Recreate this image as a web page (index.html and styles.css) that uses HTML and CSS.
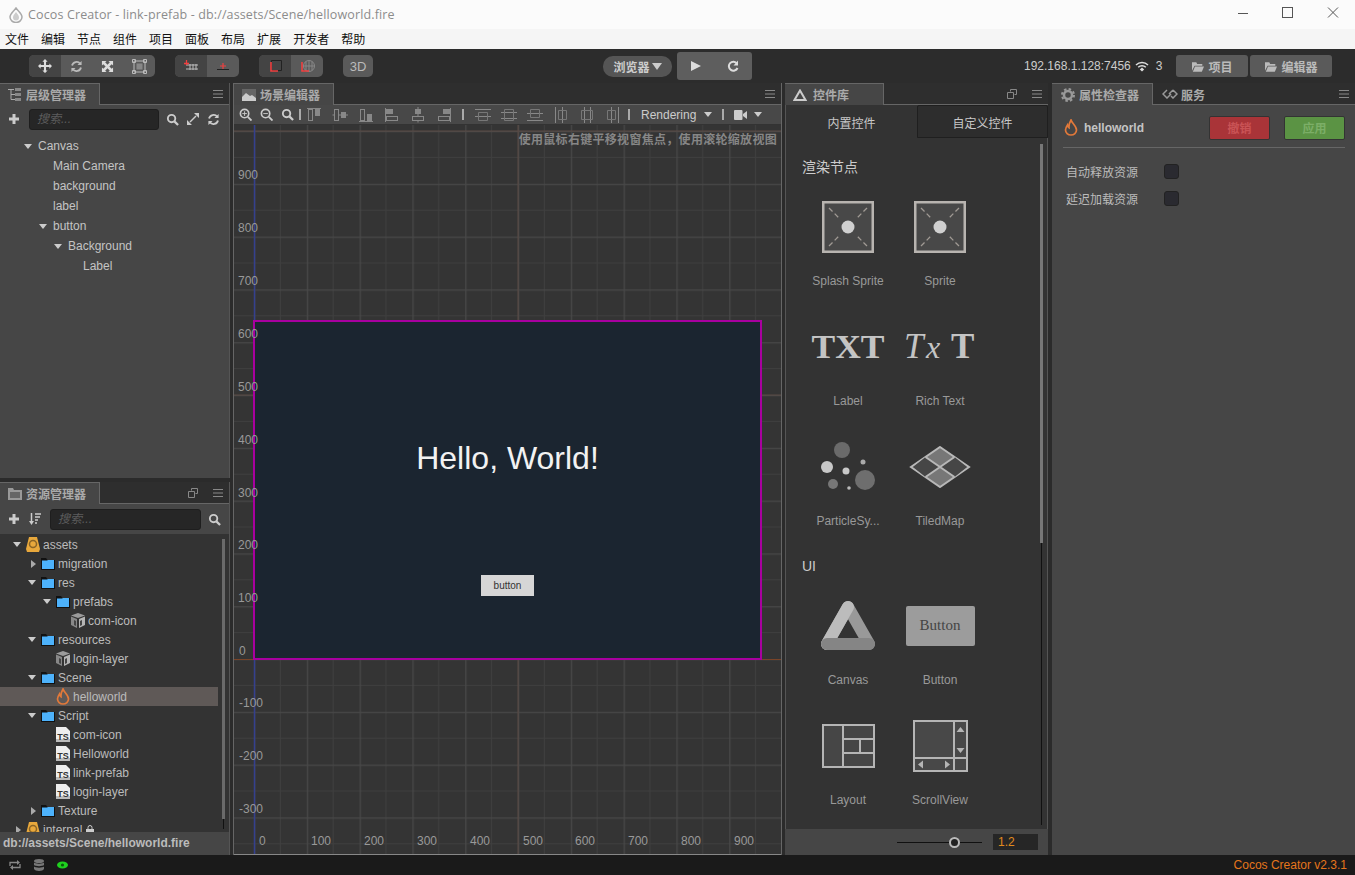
FILE: index.html
```html
<!DOCTYPE html>
<html lang="en">
<head>
    <meta charset="UTF-8">
    <title>Cocos Creator - link-prefab</title>
    <link rel="stylesheet" href="styles.css">
</head>
<body>
<svg class="sprite" width="0" height="0">
    <symbol id="i-search" viewBox="0 0 14 14"><circle cx="6" cy="6" r="4" fill="none" stroke="currentColor" stroke-width="2"/><path d="M9 9l4 4" stroke="currentColor" stroke-width="2.4"/></symbol>
    <symbol id="i-plus" viewBox="0 0 12 12"><path d="M6 1v10M1 6h10" stroke="currentColor" stroke-width="3"/></symbol>
    <symbol id="i-sync" viewBox="0 0 14 14"><path d="M2.2 6A5 5 0 0 1 11 4M11.8 8A5 5 0 0 1 3 10" fill="none" stroke="currentColor" stroke-width="2"/><path d="M12.5 1v4.5H8zM1.5 13V8.500H6z" fill="currentColor"/></symbol>
    <symbol id="i-menu" viewBox="0 0 10 8"><path d="M0 .5h10M0 4h10M0 7.500h10" stroke="currentColor"/></symbol>
    <symbol id="i-popout" viewBox="0 0 10 10"><path d="M3.500 2.500V.5h6v5h-2M.5 3.500h6v6h-6z" fill="none" stroke="currentColor"/></symbol>
    <symbol id="i-folder" viewBox="0 0 14 13"><path d="M0 1h5l1.500 2H14v10H0z" fill="#111"/><path d="M1 3.500h5l1-.5h6v9H1z" fill="#4db2fb"/></symbol>
    <symbol id="i-db" viewBox="0 0 14 15"><path d="M3 0h8l3 12-1 3H1l-1-3z" fill="#e8a83c"/><circle cx="7" cy="7" r="3.500" fill="none" stroke="#8a6426" stroke-width="1.500"/></symbol>
    <symbol id="i-cube" viewBox="0 0 14 15"><path d="M7 0l7 2.500-7 2.500-7-2.500z" fill="#9b9b9b"/><path d="M0 3.500l6 2.500v9l-6-3z" fill="#888"/><path d="M14 3.500L8 6v9l6-3z" fill="#b5b5b5"/><path d="M3 7v5l2 1V8zM11 7v5l-2 1V8z" fill="#444"/></symbol>
    <symbol id="i-fire" viewBox="0 0 14 17"><path d="M7 1c.5 3 5.500 5.500 5.500 10a5.500 5 0 0 1-11 0c0-2 1-3.500 2-5 .3 1.500.8 2.300 1.500 2.700C4.800 6 5.500 3.500 7 1z" fill="none" stroke="#e2793a" stroke-width="1.700"/></symbol>
    <symbol id="i-sprite" viewBox="0 0 52 52"><rect x="1.250" y="1.250" width="49.500" height="49.500" fill="#484848" stroke="#b8b4b0" stroke-width="2.500"/><path d="M7 7l10 10M45 7L35 17M7 45l10-10M45 45L35 35" stroke="#a09a94" stroke-width="1.300" stroke-dasharray="5 3"/><circle cx="26" cy="26" r="6.500" fill="#d0d0d0"/></symbol>
    <symbol id="i-align-top" viewBox="0 0 16 16"><path d="M1 1.500h14" stroke="#888"/><rect x="2.500" y="2.500" width="4" height="11" fill="none" stroke="#888"/><rect x="9" y="2" width="5" height="7" fill="#888"/></symbol>
    <symbol id="i-align-mid" viewBox="0 0 16 16"><path d="M.5 8H2M7 8h2M14 8h2" stroke="#888"/><rect x="2.500" y="2.500" width="4" height="11" fill="none" stroke="#888"/><rect x="9" y="5" width="5" height="6" fill="#888"/></symbol>
    <symbol id="i-align-bot" viewBox="0 0 16 16"><path d="M1 14.500h14" stroke="#888"/><rect x="2.500" y="2.500" width="4" height="11" fill="none" stroke="#888"/><rect x="9" y="7" width="5" height="7" fill="#888"/></symbol>
    <symbol id="i-dist-top" viewBox="0 0 16 16"><path d="M0 2.500h16M0 9.500h16" stroke="#888"/><path d="M3.500 5.500h9v8h-9z" fill="none" stroke="#777"/></symbol>
    <symbol id="i-dist-mid" viewBox="0 0 16 16"><path d="M0 5.500h16M0 11.500h16" stroke="#888"/><path d="M3.500 2.500h9v11h-9z" fill="none" stroke="#777"/></symbol>
    <symbol id="i-dist-bot" viewBox="0 0 16 16"><path d="M0 6.500h16M0 13.500h16" stroke="#888"/><path d="M3.500 2.500h9v8h-9z" fill="none" stroke="#777"/></symbol>
    <symbol id="i-open" viewBox="0 0 14 12"><path d="M0 1h5l1 2h6v2H3L0 11z" fill="currentColor"/><path d="M3.500 6H14l-2.500 6H1z" fill="currentColor"/></symbol>
</svg>

<div class="app">
    <div class="titlebar">
        <svg class="app-logo" viewBox="0 0 14 16" width="14" height="16"><path d="M7 1c3 4 6 6 6 9a6 5.500 0 0 1-12 0c0-3 3-5 6-9z" fill="none" stroke="#aaa" stroke-width="1.500"/><path d="M7 5c1.500 2 3 3.500 3 5.500a3 3 0 0 1-6 0C4 8.500 5.500 7 7 5z" fill="#ccc"/></svg>
        <span class="title-text">Cocos Creator - link-prefab - db://assets/Scene/helloworld.fire</span>
        <div class="win-buttons">
            <span class="win-btn"><svg width="12" height="12" viewBox="0 0 12 12"><path d="M1 6.500h10" stroke="#555"/></svg></span>
            <span class="win-btn"><svg width="12" height="12" viewBox="0 0 12 12"><rect x=".5" y=".5" width="10" height="10" fill="none" stroke="#555"/></svg></span>
            <span class="win-btn"><svg width="12" height="12" viewBox="0 0 12 12"><path d="M1 .5l10 10M11 .5l-10 10" stroke="#555"/></svg></span>
        </div>
    </div>
    <div class="menubar">
        <span>文件</span><span>编辑</span><span>节点</span><span>组件</span><span>项目</span><span>面板</span><span>布局</span><span>扩展</span><span>开发者</span><span>帮助</span>
    </div>

    <div class="toolbar">
        <div class="tool-group">
            <span class="tool active"><svg width="14" height="14" viewBox="0 0 16 16"><path d="M8 0l3 3H9.200v3.800H13V5l3 3-3 3V9.200H9.200V13H11l-3 3-3-3h1.800V9.200H3V11L0 8l3-3v1.800h3.800V3H5z" fill="#ddd"/></svg></span>
            <span class="tool"><svg width="13" height="13"><use href="#i-sync"/></svg></span>
            <span class="tool"><svg width="13" height="13" viewBox="0 0 14 14"><path d="M1 1h5L4.500 2.500l2.500 2.500 2.500-2.500L8 1h5v5l-1.500-1.500L9 7l2.500 2.500L13 8v5H8l1.500-1.500L7 9l-2.500 2.500L6 13H1V8l1.500 1.500L5 7 2.500 4.500 1 6z" fill="#ddd"/></svg></span>
            <span class="tool"><svg width="15" height="15" viewBox="0 0 15 15"><path d="M.5.5h3v3h-3zM11.500.5h3v3h-3zM.5 11.500h3v3h-3zM11.500 11.500h3v3h-3zM2 2h11v11H2z" fill="none" stroke="#bbb"/><rect x="4.500" y="4.500" width="6" height="6" fill="#888"/></svg></span>
        </div>
        <div class="tool-group">
            <span class="tool active"><svg width="14" height="12" viewBox="0 0 14 12"><path d="M2 5h12M2 9h12M6 4v6M9 4v6M12 4v6" stroke="#bbb"/><path d="M0 3.500h5M2.500 0v5" stroke="#f04040" stroke-width="1.300" fill="none"/></svg></span>
            <span class="tool"><svg width="14" height="12" viewBox="0 0 14 12"><path d="M1 9.500h12" stroke="#222"/><path d="M7 3v6M4 6h6" stroke="#f04040" stroke-width="1.200"/></svg></span>
        </div>
        <div class="tool-group">
            <span class="tool active"><svg width="13" height="13" viewBox="0 0 13 13"><path d="M2.500.5h10v10h-10z" fill="none" stroke="#222"/><path d="M2 2v9h7" fill="none" stroke="#f04040" stroke-width="1.600"/></svg></span>
            <span class="tool"><svg width="15" height="13" viewBox="0 0 15 13"><circle cx="9" cy="6" r="5.500" fill="none" stroke="#888"/><path d="M9 .5v11M3.500 6h11M6 1.500v9M12 1.500v9" stroke="#888"/><path d="M2 2v9h7" fill="none" stroke="#f04040" stroke-width="1.600"/></svg></span>
        </div>
        <div class="tool-group"><span class="tool label-3d">3D</span></div>
        <div class="browser-pill">浏览器<span class="caret-down"></span></div>
        <div class="play-group">
            <svg width="12" height="12" viewBox="0 0 12 12"><path d="M1 1l10 5-10 5z" fill="#ddd"/></svg>
            <svg width="12" height="12" viewBox="0 0 12 12"><path d="M10 3.500A4.500 4.500 0 1 0 10.500 8" fill="none" stroke="#ddd" stroke-width="2"/><path d="M11 .5v5H6.500z" fill="#ddd"/></svg>
        </div>
        <div class="preview-info">
            <span>192.168.1.128:7456</span>
            <svg width="14" height="11" viewBox="0 0 14 11"><path d="M1 4a8.500 8.500 0 0 1 12 0M3.200 6.200a5.500 5.500 0 0 1 7.600 0" fill="none" stroke="#ddd" stroke-width="1.500"/><path d="M7 6.500l2.200 2L7 10.500l-2.200-2z" fill="#ddd"/></svg>
            <span>3</span>
        </div>
        <div class="open-btn open-project"><svg width="12" height="11"><use href="#i-open"/></svg>项目</div>
        <div class="open-btn open-editor"><svg width="12" height="11"><use href="#i-open"/></svg>编辑器</div>
    </div>

    <div class="main">
        <div class="col-left">
            <section class="panel hierarchy">
                <div class="tabbar">
                    <div class="tab tab-hierarchy">
                        <svg width="14" height="14" viewBox="0 0 14 14"><path d="M0 1.500h6M3 1.500v10h4M3 6.500h4" fill="none" stroke="#aaa"/><path d="M7 0h6v3H7zM7 5h6v3H7zM7 10h6v3H7z" fill="#888"/></svg>
                        层级管理器
                    </div>
                    <div class="tab-tools"><svg width="10" height="8"><use href="#i-menu"/></svg></div>
                </div>
                <div class="search-row">
                    <svg class="tool-plus" width="12" height="12"><use href="#i-plus"/></svg>
                    <div class="search-box box-hierarchy">搜索...</div>
                    <div class="search-tools">
                        <svg width="13" height="13"><use href="#i-search"/></svg>
                        <svg width="12" height="12" viewBox="0 0 12 12"><path d="M3 9l6-6" stroke="currentColor" stroke-width="1.500"/><path d="M7 0h5v5zM5 12H0V7z" fill="currentColor"/></svg>
                        <svg width="13" height="13"><use href="#i-sync"/></svg>
                    </div>
                </div>
                <div class="node-tree">
                    <div class="row d0"><span class="arrow"></span>Canvas</div>
                    <div class="row d1"><span class="arrow none"></span>Main Camera</div>
                    <div class="row d1"><span class="arrow none"></span>background</div>
                    <div class="row d1"><span class="arrow none"></span>label</div>
                    <div class="row d1"><span class="arrow"></span>button</div>
                    <div class="row d2"><span class="arrow"></span>Background</div>
                    <div class="row d3"><span class="arrow none"></span>Label</div>
                </div>
            </section>

            <section class="panel assets">
                <div class="tabbar">
                    <div class="tab tab-assets">
                        <svg width="14" height="12" viewBox="0 0 14 12"><path d="M0 0h5l1 2h8v10H0z" fill="#999"/><path d="M2 4h10v6H2z" fill="#666"/></svg>
                        资源管理器
                    </div>
                    <div class="tab-tools">
                        <svg width="10" height="10"><use href="#i-popout"/></svg>
                        <svg width="10" height="8"><use href="#i-menu"/></svg>
                    </div>
                </div>
                <div class="search-row assets-tools">
                    <svg class="tool-plus" width="12" height="12"><use href="#i-plus"/></svg>
                    <svg class="tool-sort" width="12" height="12" viewBox="0 0 12 12"><path d="M2.500 0v9" stroke="currentColor" stroke-width="1.500"/><path d="M0 8h5l-2.500 4z" fill="currentColor"/><path d="M6 1h6M6 4h5M6 7h3M6 10h2" stroke="currentColor" stroke-width="1.500"/></svg>
                    <div class="search-box box-assets">搜索...</div>
                    <svg class="tool-find" width="13" height="13"><use href="#i-search"/></svg>
                </div>
                <div class="asset-tree">
                    <div class="row a0"><span class="arrow"></span><svg class="ico" width="14" height="15"><use href="#i-db"/></svg>assets</div>
                    <div class="row a1"><span class="arrow closed"></span><svg class="ico" width="14" height="13"><use href="#i-folder"/></svg>migration</div>
                    <div class="row a1"><span class="arrow"></span><svg class="ico" width="14" height="13"><use href="#i-folder"/></svg>res</div>
                    <div class="row a2"><span class="arrow"></span><svg class="ico" width="14" height="13"><use href="#i-folder"/></svg>prefabs</div>
                    <div class="row a3"><span class="arrow none"></span><svg class="ico" width="14" height="15"><use href="#i-cube"/></svg>com-icon</div>
                    <div class="row a1"><span class="arrow"></span><svg class="ico" width="14" height="13"><use href="#i-folder"/></svg>resources</div>
                    <div class="row a2"><span class="arrow none"></span><svg class="ico" width="14" height="15"><use href="#i-cube"/></svg>login-layer</div>
                    <div class="row a1"><span class="arrow"></span><svg class="ico" width="14" height="13"><use href="#i-folder"/></svg>Scene</div>
                    <div class="row a2 selected"><span class="arrow none"></span><svg class="ico" width="14" height="17"><use href="#i-fire"/></svg>helloworld</div>
                    <div class="row a1"><span class="arrow"></span><svg class="ico" width="14" height="13"><use href="#i-folder"/></svg>Script</div>
                    <div class="row a2"><span class="arrow none"></span><span class="ts-icon">TS</span>com-icon</div>
                    <div class="row a2"><span class="arrow none"></span><span class="ts-icon">TS</span>Helloworld</div>
                    <div class="row a2"><span class="arrow none"></span><span class="ts-icon">TS</span>link-prefab</div>
                    <div class="row a2"><span class="arrow none"></span><span class="ts-icon">TS</span>login-layer</div>
                    <div class="row a1"><span class="arrow closed"></span><svg class="ico" width="14" height="13"><use href="#i-folder"/></svg>Texture</div>
                    <div class="row a0"><span class="arrow closed"></span><svg class="ico" width="14" height="15"><use href="#i-db"/></svg>internal<svg class="lock" width="8" height="9" viewBox="0 0 8 9"><path d="M2 4V2.500a2 2 0 0 1 4 0V4" fill="none" stroke="#ccc"/><rect y="4" width="8" height="5" fill="#ccc"/></svg></div>
                    <div class="tree-scrollbar"></div>
                </div>
                <div class="path-bar">db://assets/Scene/helloworld.fire</div>
            </section>
        </div>

        <section class="panel scene">
            <div class="tabbar">
                <div class="tab tab-scene">
                    <svg width="14" height="12" viewBox="0 0 14 12"><path d="M0 0h14v12H0z" fill="#666"/><path d="M0 12V8l4-4 4 3 2-1 4 3v3z" fill="#ccc"/></svg>
                    场景编辑器
                </div>
                <div class="tab-tools"><svg width="10" height="8"><use href="#i-menu"/></svg></div>
            </div>
            <div class="scene-tools">
                <svg class="zoom" width="13" height="13" viewBox="0 0 14 14"><circle cx="6" cy="6" r="4.500" fill="none" stroke="#ccc" stroke-width="1.800"/><path d="M9.500 9.500l4 4" stroke="#ccc" stroke-width="2"/><path d="M3.500 6h5M6 3.500v5" stroke="#ccc"/></svg>
                <svg class="zoom" width="13" height="13" viewBox="0 0 14 14"><circle cx="6" cy="6" r="4.500" fill="none" stroke="#ccc" stroke-width="1.800"/><path d="M9.500 9.500l4 4" stroke="#ccc" stroke-width="2"/><path d="M3.500 6h5" stroke="#ccc"/></svg>
                <svg class="zoom" width="13" height="13"><use href="#i-search"/></svg>
                <span class="sep first"></span>
                <svg class="align" width="16" height="16"><use href="#i-align-top"/></svg>
                <svg class="align" width="16" height="16"><use href="#i-align-mid"/></svg>
                <svg class="align" width="16" height="16"><use href="#i-align-bot"/></svg>
                <svg class="align turn" width="16" height="16"><use href="#i-align-top"/></svg>
                <svg class="align turn" width="16" height="16"><use href="#i-align-mid"/></svg>
                <svg class="align turn" width="16" height="16"><use href="#i-align-bot"/></svg>
                <span class="sep"></span>
                <svg class="align" width="16" height="16"><use href="#i-dist-top"/></svg>
                <svg class="align" width="16" height="16"><use href="#i-dist-mid"/></svg>
                <svg class="align" width="16" height="16"><use href="#i-dist-bot"/></svg>
                <svg class="align turn" width="16" height="16"><use href="#i-dist-top"/></svg>
                <svg class="align turn" width="16" height="16"><use href="#i-dist-mid"/></svg>
                <svg class="align turn" width="16" height="16"><use href="#i-dist-bot"/></svg>
                <span class="sep tight"></span>
                <span class="rendering">Rendering<span class="caret-down"></span></span>
                <span class="sep"></span>
                <svg class="camera" width="13" height="10" viewBox="0 0 13 10"><rect width="8.500" height="10" rx="1" fill="#ccc"/><path d="M9 4l4-3v8L9 6z" fill="#ccc"/></svg>
                <span class="caret-down"></span>
            </div>
            <div class="scene-view">
                <svg class="grid" width="548" height="729">
                    <defs>
                        <pattern id="grid-cell" width="52.8" height="52.8" patternUnits="userSpaceOnUse" patternTransform="translate(20 534)">
                            <path d="M26.400 0V52.800M0 26.400H52.800" stroke="#3f3f3f"/>
                            <path d="M.5 0V52.800M0 .5H52.800" stroke="#484848" stroke-width="1.500"/>
                        </pattern>
                    </defs>
                    <rect width="548" height="729" fill="url(#grid-cell)"/>
                    <path d="M284 0V729M0 6H548M0 270H548" stroke="#5a4b45"/>
                    <path d="M0 534.500H548" stroke="#7a4428"/>
                    <path d="M20.500 0V729" stroke="#34408f" stroke-width="1.500"/>
                </svg>
                <div class="scene-hint">使用鼠标右键平移视窗焦点，使用滚轮缩放视图</div>
                <div class="design-rect">
                    <div class="hello">Hello, World!</div>
                    <div class="game-button">button</div>
                </div>
                <svg class="grid ruler" width="548" height="729">
                    <text x="4" y="54">900</text><text x="4" y="107">800</text><text x="4" y="160">700</text>
                    <text x="4" y="213">600</text><text x="4" y="266">500</text><text x="4" y="319">400</text>
                    <text x="4" y="372">300</text><text x="4" y="424">200</text><text x="4" y="477">100</text>
                    <text x="5" y="530">0</text><text x="5" y="582">-100</text><text x="5" y="635">-200</text><text x="5" y="688">-300</text>
                    <text x="25" y="720">0</text><text x="77" y="720">100</text><text x="130" y="720">200</text>
                    <text x="183" y="720">300</text><text x="236" y="720">400</text><text x="289" y="720">500</text>
                    <text x="341" y="720">600</text><text x="394" y="720">700</text><text x="447" y="720">800</text><text x="500" y="720">900</text>
                </svg>
            </div>
        </section>

        <section class="panel library">
            <div class="tabbar">
                <div class="tab tab-library">
                    <svg width="14" height="12" viewBox="0 0 14 12"><path d="M7 1.500L12.500 11h-11z" fill="none" stroke="#ccc" stroke-width="2"/></svg>
                    控件库
                </div>
                <div class="tab-tools">
                    <svg width="10" height="10"><use href="#i-popout"/></svg>
                    <svg width="10" height="8"><use href="#i-menu"/></svg>
                </div>
            </div>
            <div class="lib-tabs">
                <div class="lib-tab">内置控件</div>
                <div class="lib-tab off">自定义控件</div>
            </div>
            <div class="lib-body">
                <h4 class="lib-title">渲染节点</h4>
                <div class="lib-grid">
                    <div class="lib-item"><div class="lib-icon"><svg width="52" height="52"><use href="#i-sprite"/></svg></div><span>Splash Sprite</span></div>
                    <div class="lib-item"><div class="lib-icon"><svg width="52" height="52"><use href="#i-sprite"/></svg></div><span>Sprite</span></div>
                    <div class="lib-item"><div class="lib-icon"><svg width="80" height="44" viewBox="0 0 80 44"><text x="40" y="33" textLength="73" lengthAdjust="spacingAndGlyphs" class="txt-icon mid">TXT</text></svg></div><span>Label</span></div>
                    <div class="lib-item"><div class="lib-icon"><svg width="80" height="44" viewBox="0 0 80 44"><text x="4" y="33" class="txt-icon rich-t">T</text><text x="26" y="33" class="txt-icon rich-x">x</text><text x="51" y="33" class="txt-icon">T</text></svg></div><span>Rich Text</span></div>
                    <div class="lib-item"><div class="lib-icon"><svg width="56" height="50" viewBox="0 0 56 50"><circle cx="22" cy="8" r="8" fill="#6a6a6a"/><circle cx="7" cy="25" r="6" fill="#c8c8c8"/><circle cx="26" cy="29" r="3.500" fill="#c8c8c8"/><circle cx="43" cy="20" r="2.500" fill="#aaa"/><circle cx="13" cy="42" r="5" fill="#777"/><circle cx="45" cy="38" r="10" fill="#6e6e6e"/><circle cx="29" cy="46" r="1.800" fill="#bbb"/></svg></div><span>ParticleSy...</span></div>
                    <div class="lib-item"><div class="lib-icon"><svg width="62" height="42" viewBox="0 0 62 42"><path d="M31 1l29 20-29 20L2 21z" fill="#777" stroke="#b8b8b8" stroke-width="2"/><path d="M16.500 11L31 21l-14.500 10L4 21zM45.500 11L31 21l14.500 10L58 21z" fill="#464646"/><path d="M16.500 11l29 20M45.500 11l-29 20" stroke="#b8b8b8" stroke-width="2"/></svg></div><span>TiledMap</span></div>
                </div>
                <h4 class="lib-title">UI</h4>
                <div class="lib-grid">
                    <div class="lib-item"><div class="lib-icon"><svg width="58" height="52" viewBox="0 0 58 52"><path d="M29 7L8 44h42z" fill="none" stroke="#999" stroke-width="12" stroke-linejoin="round"/><path d="M29 7L8 44" stroke="#bcbcbc" stroke-width="12" stroke-linecap="round"/><path d="M8 44h42" stroke="#858585" stroke-width="12" stroke-linecap="round"/></svg></div><span>Canvas</span></div>
                    <div class="lib-item"><div class="lib-icon"><div class="btn-icon">Button</div></div><span>Button</span></div>
                    <div class="lib-item"><div class="lib-icon"><svg width="53" height="44" viewBox="0 0 53 44"><path d="M1 1h51v42H1z" fill="#464646" stroke="#b5b5b5" stroke-width="2"/><path d="M21 1v42M21 15h31M21 29h31M38 15v14" stroke="#b5b5b5" stroke-width="2"/></svg></div><span>Layout</span></div>
                    <div class="lib-item"><div class="lib-icon"><svg width="55" height="52" viewBox="0 0 55 52"><path d="M1 1h53v50H1z" fill="#484848" stroke="#b5b5b5" stroke-width="2"/><path d="M41 1v50M1 38h53" stroke="#b5b5b5" stroke-width="2"/><path d="M47.500 7l4 5h-8zM47.500 33l4-5h-8zM5 44.500l5-4v8zM37 44.500l-5-4v8z" fill="#b5b5b5"/></svg></div><span>ScrollView</span></div>
                </div>
                <div class="lib-scrollbar"></div>
            </div>
            <div class="lib-footer">
                <div class="slider"><span class="knob"></span></div>
                <div class="scale-input">1.2</div>
            </div>
        </section>

        <section class="panel inspector">
            <div class="tabbar">
                <div class="tab tab-inspector">
                    <svg width="14" height="14" viewBox="0 0 14 14"><circle cx="7" cy="7" r="4" fill="none" stroke="#999" stroke-width="2.500"/><circle cx="7" cy="7" r="6" fill="none" stroke="#999" stroke-width="2" stroke-dasharray="2.500 2.200"/></svg>
                    属性检查器
                </div>
                <div class="tab-plain">
                    <svg width="16" height="10" viewBox="0 0 16 10"><path d="M5 1L1 5l4 4 4-4M11 1L7 5M11 1l4 4-4 4-2-2" fill="none" stroke="#999" stroke-width="1.500"/></svg>
                    服务
                </div>
                <div class="tab-tools"><svg width="10" height="8"><use href="#i-menu"/></svg></div>
            </div>
            <div class="insp-head">
                <svg width="14" height="17"><use href="#i-fire"/></svg>
                <span class="insp-name">helloworld</span>
                <span class="insp-btn revert">撤销</span>
                <span class="insp-btn apply">应用</span>
            </div>
            <div class="insp-row"><span>自动释放资源</span><i class="check"></i></div>
            <div class="insp-row"><span>延迟加载资源</span><i class="check"></i></div>
        </section>
    </div>

    <div class="statusbar">
        <svg width="12" height="10" viewBox="0 0 12 10"><path d="M1 6V2.500h8M11 4v3.500H3" fill="none" stroke="#888" stroke-width="1.300"/><path d="M8 0l3 2.500L8 5zM4 5L1 7.500 4 10z" fill="#888"/></svg>
        <svg width="10" height="12" viewBox="0 0 10 12"><ellipse cx="5" cy="2" rx="5" ry="2" fill="#777"/><path d="M0 3.500c1 1.500 9 1.500 10 0V6c-1 1.500-9 1.500-10 0zM0 7.500c1 1.500 9 1.500 10 0V10c-1 2.500-9 2.500-10 0z" fill="#777"/></svg>
        <svg width="11" height="8" viewBox="0 0 11 8"><ellipse cx="5.500" cy="4" rx="5.500" ry="3.500" fill="#1fd11f"/><circle cx="5.500" cy="4" r="1.600" fill="#0a5a0a"/></svg>
        <span class="version">Cocos Creator v2.3.1</span>
    </div>
</div>
</body>
</html>
```

FILE: styles.css
```css
* {
    box-sizing: border-box;
}

html, body {
    margin: 0;
    background: #2b2b2b;
}

body {
    font-family: "Liberation Sans", "Noto Sans CJK SC", sans-serif;
    font-size: 12px;
    color: #bbb;
}

.sprite {
    position: absolute;
}

.app {
    width: 1355px;
    height: 875px;
    display: flex;
    flex-direction: column;
    overflow: hidden;
}

svg {
    flex: none;
}

/* window chrome */
.titlebar {
    height: 29px;
    background: #fbfbfb;
    display: flex;
    align-items: center;
    padding-left: 9px;
}

.title-text {
    margin-left: 5px;
    font-family: "Open Sans", "Noto Sans", sans-serif;
    font-size: 12.500px;
    letter-spacing: .13px;
    color: #8c8c8c;
}

.win-buttons {
    margin-left: auto;
    align-self: flex-start;
    display: flex;
}

.win-btn {
    width: 45px;
    height: 26px;
    display: flex;
    align-items: center;
    justify-content: center;
}

.menubar {
    height: 20px;
    background: #f5f5f5;
    display: flex;
    align-items: center;
    gap: 12px;
    padding: 0 0 2px 5px;
    color: #111;
}

/* main toolbar */
.toolbar {
    height: 34px;
    background: #2c2c2c;
    display: flex;
    align-items: center;
    padding-left: 29px;
}

.tool-group {
    height: 22px;
    display: flex;
    background: #5a5a5a;
    border-radius: 5px;
    overflow: hidden;
    margin-right: 20px;
}

.tool {
    width: 32px;
    display: flex;
    align-items: center;
    justify-content: center;
}

.tool-group:first-child .tool {
    width: 31.500px;
}

.tool.active {
    background: #444;
}

.label-3d {
    width: 30px;
    color: #bbb;
    font-size: 13px;
}

.browser-pill {
    width: 69px;
    height: 21px;
    margin-left: 210px;
    border-radius: 10px;
    background: #555;
    color: #ccc;
    display: flex;
    align-items: center;
    justify-content: center;
    gap: 2px;
    font-weight: bold;
}

.caret-down {
    display: inline-block;
    width: 0;
    height: 0;
    border-left: 4px solid transparent;
    border-right: 4px solid transparent;
    border-top: 5px solid #ccc;
}

.browser-pill .caret-down {
    border-left-width: 5px;
    border-right-width: 5px;
    border-top-width: 7px;
}

.play-group {
    width: 75px;
    height: 28px;
    margin-left: 5px;
    border-radius: 3px;
    background: #5e5e5e;
    display: flex;
    align-items: center;
    justify-content: space-between;
    padding: 0 13px 0 13px;
}

.preview-info {
    margin-left: 272px;
    display: flex;
    align-items: center;
    gap: 4px;
    color: #ccc;
}

.preview-info span:last-child {
    margin-left: 3px;
}

.open-btn {
    height: 22px;
    margin-left: 14px;
    border-radius: 3px;
    background: #5a5a5a;
    color: #bbb;
    font-weight: bold;
    display: flex;
    align-items: center;
    justify-content: center;
    gap: 4px;
}

.open-project {
    width: 72px;
}

.open-editor {
    width: 82px;
    margin-left: 2px;
}

/* panels */
.main {
    flex: 1;
    min-height: 0;
    display: flex;
    gap: 3px;
}

.col-left {
    width: 230px;
    display: flex;
    flex-direction: column;
}

.panel {
    display: flex;
    flex-direction: column;
    background: #464646;
    min-height: 0;
    position: relative;
}

.hierarchy {
    height: 395px;
    border-right: 1px solid #555;
}

.assets {
    flex: 1;
    margin-top: 4px;
    border-right: 1px solid #555;
}

.scene {
    width: 549px;
    border-left: 1px solid #666;
    border-right: 1px solid #666;
}

.library {
    width: 263px;
}

.inspector {
    flex: 1;
    margin-left: 1px;
}

.tabbar {
    height: 22px;
    flex: none;
    background: #2e2e2e;
    border-bottom: 1px solid #666;
    display: flex;
    align-items: flex-end;
}

.tab {
    height: 22px;
    margin-bottom: -1px;
    background: #464646;
    border-top: 1px solid #666;
    border-right: 1px solid #666;
    display: flex;
    align-items: center;
    gap: 4px;
    color: #aaa;
    font-weight: bold;
    padding-left: 8px;
}

.tab-hierarchy, .tab-assets {
    width: 100px;
}

.tab-scene {
    width: 100px;
}

.tab-library {
    width: 99px;
    gap: 6px;
}

.tab-inspector {
    width: 101px;
    padding-left: 9px;
}

.tab-plain {
    height: 21px;
    display: flex;
    align-items: center;
    gap: 3px;
    padding: 1px 0 0 9px;
    color: #aaa;
    font-weight: bold;
}

.tab-tools {
    margin-left: auto;
    height: 21px;
    display: flex;
    align-items: center;
    gap: 15px;
    padding-right: 6px;
    color: #888;
}

.search-row {
    height: 28px;
    flex: none;
    display: flex;
    align-items: center;
    color: #ccc;
    padding-left: 8px;
}

.search-box {
    height: 21px;
    background: #262626;
    border: 1px solid #1e1e1e;
    border-radius: 3px;
    color: #5c5c5c;
    font-style: italic;
    line-height: 19px;
    padding-left: 7px;
}

.box-hierarchy {
    width: 130px;
    margin-left: 9px;
}

.search-tools {
    display: flex;
    align-items: center;
    gap: 8px;
    margin-left: 7px;
}

.assets-tools {
    height: 30px;
    background: #464646;
}

.tool-sort {
    margin-left: 9px;
}

.box-assets {
    width: 151px;
    margin-left: 9px;
}

.tool-find {
    margin-left: 7px;
}

/* trees */
.node-tree {
    flex: 1;
    padding-top: 3px;
    color: #c4c4c4;
}

.row {
    display: flex;
    align-items: center;
    white-space: nowrap;
}

.node-tree .row {
    height: 20px;
}

.arrow {
    width: 8px;
    height: 0;
    margin-right: 6px;
    flex: none;
    border-left: 4px solid transparent;
    border-right: 4px solid transparent;
    border-top: 5px solid #ccc;
}

.arrow.none {
    visibility: hidden;
}

.d0 {
    padding-left: 24px;
}

.d1 {
    padding-left: 39px;
}

.d2 {
    padding-left: 54px;
}

.d3 {
    padding-left: 69px;
}

.asset-tree {
    flex: 1;
    min-height: 0;
    background: #333;
    padding-top: 1px;
    position: relative;
    overflow: hidden;
    color: #bbb;
}

.asset-tree .row {
    height: 19px;
    width: 218px;
}

.asset-tree .arrow {
    margin-right: 5px;
}

.asset-tree .arrow.closed {
    width: 5px;
    margin: 0 5px 0 3px;
    height: 8px;
    border-top: 4px solid transparent;
    border-bottom: 4px solid transparent;
    border-left: 5px solid #aaa;
    border-right: 0;
}

.ico {
    margin-right: 3px;
}

.ts-icon {
    width: 14px;
    height: 15px;
    margin-right: 3px;
    flex: none;
    background: linear-gradient(to bottom, #eee 12px, #bbb 12px);
    clip-path: polygon(0 0, 10px 0, 14px 4px, 14px 15px, 0 15px);
    color: #333;
    font-size: 9px;
    font-weight: bold;
    line-height: 20px;
    text-align: center;
}

.lock {
    margin-left: 4px;
}

.a0 {
    padding-left: 13px;
}

.a1 {
    padding-left: 28px;
}

.a2 {
    padding-left: 43px;
}

.a3 {
    padding-left: 58px;
}

.selected {
    background: #5f5957;
}

.tree-scrollbar {
    position: absolute;
    left: 222px;
    top: 5px;
    width: 3px;
    height: 280px;
    background: #6a6a6a;
}

.tree-scrollbar::after {
    content: "";
    position: absolute;
    left: 1px;
    top: 100%;
    width: 1px;
    height: 10px;
    background: #111;
}

.path-bar {
    height: 23px;
    flex: none;
    background: #464646;
    padding-left: 3px;
    line-height: 23px;
    font-weight: bold;
    color: #bbb;
}

/* scene editor */
.scene-tools {
    height: 20px;
    flex: none;
    background: #484848;
    border-bottom: 1px solid #333;
    display: flex;
    align-items: center;
    padding-left: 5px;
    color: #ccc;
}

.zoom {
    margin-right: 8px;
}

.sep {
    width: 2px;
    height: 11px;
    margin: 0 11px 0 0;
    background: #aaa;
    flex: none;
}

.sep.first {
    margin: 0 5px 0 -3px;
}

.sep.tight {
    margin-left: -3px;
}

.align {
    margin-right: 10px;
}

.turn {
    transform: rotate(-90deg);
}

.rendering {
    display: flex;
    align-items: center;
    gap: 8px;
    color: #ccc;
    margin-right: 10px;
}

.camera {
    margin: 0 7px 0 -1px;
}

.scene-view {
    flex: 1;
    min-height: 0;
    position: relative;
    overflow: hidden;
    background: #343434;
    border-bottom: 1px solid #888;
}

.grid {
    position: absolute;
    left: 0;
    top: 0;
}

.ruler text {
    font-family: "Liberation Sans", sans-serif;
    font-size: 12px;
    fill: #999;
}

.scene-hint {
    position: absolute;
    right: 4px;
    top: 5px;
    font-weight: bold;
    letter-spacing: .3px;
    color: #868686;
}

.design-rect {
    position: absolute;
    left: 19px;
    top: 195px;
    width: 509px;
    height: 340px;
    background: #1b2530;
    border: 2px solid #a8009f;
}

.hello {
    position: absolute;
    left: 0;
    right: 0;
    top: 116px;
    text-align: center;
    font-size: 32px;
    line-height: 40px;
    color: #f2f2f2;
}

.game-button {
    position: absolute;
    left: 226px;
    top: 253px;
    width: 53px;
    height: 21px;
    background: #d6d6d6;
    color: #333;
    font-size: 10px;
    line-height: 21px;
    text-align: center;
}

/* node library */
.lib-tabs {
    height: 33px;
    flex: none;
    display: flex;
    background: #333;
    border-left: 1px solid #555;
}

.lib-tab {
    width: 131px;
    display: flex;
    align-items: center;
    justify-content: center;
    padding-top: 2px;
    color: #c8c8c8;
}

.lib-tab.off {
    background: #2d2d2d;
    border: 1px solid #1f1f1f;
    border-radius: 2px 2px 0 0;
}

.lib-body {
    flex: 1;
    min-height: 0;
    position: relative;
    overflow: hidden;
    background: #333;
    border-left: 1px solid #555;
    border-right: 1px solid #555;
    padding: 19px 0 0 16px;
}

.lib-title {
    margin: 0 0 13px;
    height: 20px;
    line-height: 20px;
    font-size: 14px;
    font-weight: normal;
    color: #ccc;
}

.lib-grid {
    display: grid;
    grid-template-columns: 92px 92px;
    grid-auto-rows: 120px;
    margin-bottom: 6px;
}

.lib-item {
    display: flex;
    flex-direction: column;
    align-items: center;
    padding-top: 5px;
    color: #999;
}

.lib-icon {
    height: 64px;
    margin-bottom: 15px;
    display: flex;
    align-items: center;
    justify-content: center;
}

.lib-item span {
    line-height: 14px;
}

.txt-icon {
    font-family: "Liberation Serif", serif;
    font-size: 35px;
    font-weight: bold;
    fill: #c4c4c4;
}

.txt-icon.mid {
    font-size: 33px;
    text-anchor: middle;
}

.rich-t {
    font-style: italic;
    font-weight: normal;
}

.rich-x {
    font-size: 32px;
    font-style: italic;
    font-weight: normal;
}

.btn-icon {
    width: 69px;
    height: 40px;
    border-radius: 2px;
    background: #9c9c9c;
    color: #444;
    font-family: "Liberation Serif", serif;
    font-size: 15px;
    line-height: 38px;
    text-align: center;
}

.lib-scrollbar {
    position: absolute;
    right: 4px;
    top: 6px;
    width: 3px;
    height: 399px;
    background: #777;
}

.lib-scrollbar::after {
    content: "";
    position: absolute;
    left: 1px;
    top: 100%;
    width: 1px;
    height: 282px;
    background: #111;
}

.lib-footer {
    height: 26px;
    flex: none;
    display: flex;
    align-items: center;
    padding-left: 112px;
}

.slider {
    width: 85px;
    height: 1px;
    background: #111;
    position: relative;
}

.knob {
    position: absolute;
    left: 52px;
    top: -5px;
    width: 11px;
    height: 11px;
    border-radius: 50%;
    background: #222;
    border: 2px solid #bbb;
}

.scale-input {
    width: 45px;
    height: 16px;
    margin-left: 11px;
    background: #262626;
    color: #e08a1e;
    line-height: 16px;
    padding-left: 5px;
}

/* inspector */
.insp-head {
    height: 43px;
    flex: none;
    margin: 0 10px 10px 11px;
    border-bottom: 1px solid #666;
    display: flex;
    align-items: center;
    padding: 3px 0 0 1px;
}

.insp-name {
    margin-left: 6px;
    font-weight: bold;
    color: #c4c4c4;
}

.insp-btn {
    width: 61px;
    height: 24px;
    border-radius: 2px;
    border: 1px solid #333;
    display: flex;
    align-items: center;
    justify-content: center;
    font-weight: bold;
}

.revert {
    margin-left: auto;
    background: #a93438;
    color: #c95355;
}

.apply {
    margin-left: 14px;
    background: #5b9344;
    color: #7cae67;
}

.insp-row {
    height: 27px;
    display: flex;
    align-items: center;
    padding-left: 14px;
    color: #bbb;
}

.check {
    width: 15px;
    height: 15px;
    margin-left: 26px;
    background: #2a2a30;
    border: 1px solid #222;
    border-radius: 3px;
}

/* status bar */
.statusbar {
    height: 20px;
    flex: none;
    background: #1a1a1a;
    display: flex;
    align-items: center;
    gap: 13px;
    padding: 0 8px 0 9px;
}

.version {
    margin-left: auto;
    color: #e5761c;
}
```
